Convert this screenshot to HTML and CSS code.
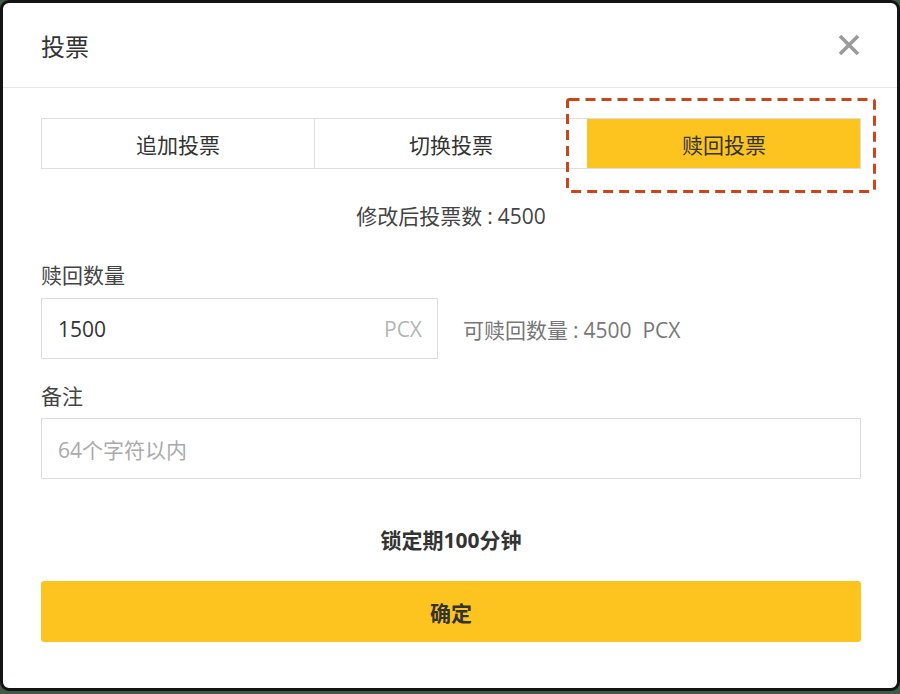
FILE: index.html
```html
<!DOCTYPE html>
<html>

<head>
    <link rel="stylesheet" href="styles.css">
</head>

<body>
    <div class="window">
        <div class="header">
            <span class="title">投票</span>
            <svg class="close" width="22" height="22" viewBox="0 0 22 22">
                <path d="M2 2 L20 20 M20 2 L2 20" stroke="#9a9a9a" stroke-width="3.6" fill="none"/>
            </svg>
        </div>

        <div class="content">
            <div class="tabs">
                <div class="tab">追加投票</div>
                <div class="tab">切换投票</div>
                <div class="tab active">赎回投票</div>
            </div>

            <div class="summary">修改后投票数<span class="colon">:</span>4500</div>

            <div class="label">赎回数量</div>
            <div class="amount-row">
                <div class="field amount">
                    <span class="value">1500</span>
                    <span class="unit">PCX</span>
                </div>
                <div class="available">可赎回数量<span class="colon">:</span>4500&nbsp;&nbsp;PCX</div>
            </div>

            <div class="label">备注</div>
            <div class="field note">
                <span class="placeholder">64个字符以内</span>
            </div>

            <div class="lock">锁定期100分钟</div>

            <button class="confirm">确定</button>
        </div>

        <svg class="highlight" width="310" height="95" viewBox="0 0 310 95">
            <rect x="1.5" y="1.5" width="307" height="92" rx="2" fill="none" stroke="#c8461c" stroke-width="3" stroke-dasharray="10 6"/>
        </svg>
    </div>
</body>

</html>
```

FILE: styles.css
```css
body {
    margin: 0;
    background-color: #3f5a45;
    font-family: "Open Sans", "Noto Sans CJK SC", sans-serif;
    color: #333;
}

.window {
    position: relative;
    width: 900px;
    height: 691px;
    box-sizing: border-box;
    border: 3px solid #141414;
    border-radius: 9px;
    background-color: #fff;
    overflow: hidden;
}

.header {
    height: 84px;
    border-bottom: 1px solid #e6e6e6;
    display: flex;
    align-items: center;
    justify-content: space-between;
    padding: 0 37px 0 38px;
}

.title {
    font-size: 24px;
    color: #333;
}

.close {
    display: block;
}

.content {
    padding: 30px 36px 0 38px;
    display: flex;
    flex-direction: column;
}

.tabs {
    display: flex;
    border: 1px solid #dedede;
    height: 49px;
}

.tab {
    flex: 1;
    display: flex;
    align-items: center;
    justify-content: center;
    font-size: 21px;
    color: #333;
    border-left: 1px solid #dedede;
}

.tab:first-child {
    border-left: none;
}

.tab.active {
    background-color: #fdc420;
    border-left-color: #fdc420;
}

.summary {
    margin-top: 32px;
    line-height: 30px;
    text-align: center;
    font-size: 21px;
    color: #444;
}

.colon {
    margin: 0 5px;
}

.label {
    margin-top: 29px;
    line-height: 30px;
    font-size: 21px;
    color: #444;
}

.amount-row {
    margin-top: 8px;
    display: flex;
    align-items: center;
}

.field {
    height: 59px;
    border: 1px solid #dcdcdc;
    display: flex;
    align-items: center;
    justify-content: space-between;
    padding: 0 15px 0 16px;
    font-size: 21px;
}

.amount {
    width: 364px;
}

.value {
    color: #333;
}

.unit {
    color: #b5b5b5;
}

.available {
    margin-left: 25px;
    font-size: 21px;
    color: #777;
}

.amount-row + .label {
    margin-top: 22px;
}

.note {
    margin-top: 7px;
}

.placeholder {
    color: #aaa;
}

.lock {
    margin-top: 46px;
    line-height: 30px;
    text-align: center;
    font-size: 21px;
    font-weight: bold;
    color: #333;
}

.confirm {
    margin-top: 26px;
    height: 61px;
    border: none;
    border-radius: 3px;
    background-color: #fdc420;
    font-family: inherit;
    font-size: 21px;
    font-weight: bold;
    color: #333;
}

.highlight {
    position: absolute;
    left: 563px;
    top: 95px;
}
```
